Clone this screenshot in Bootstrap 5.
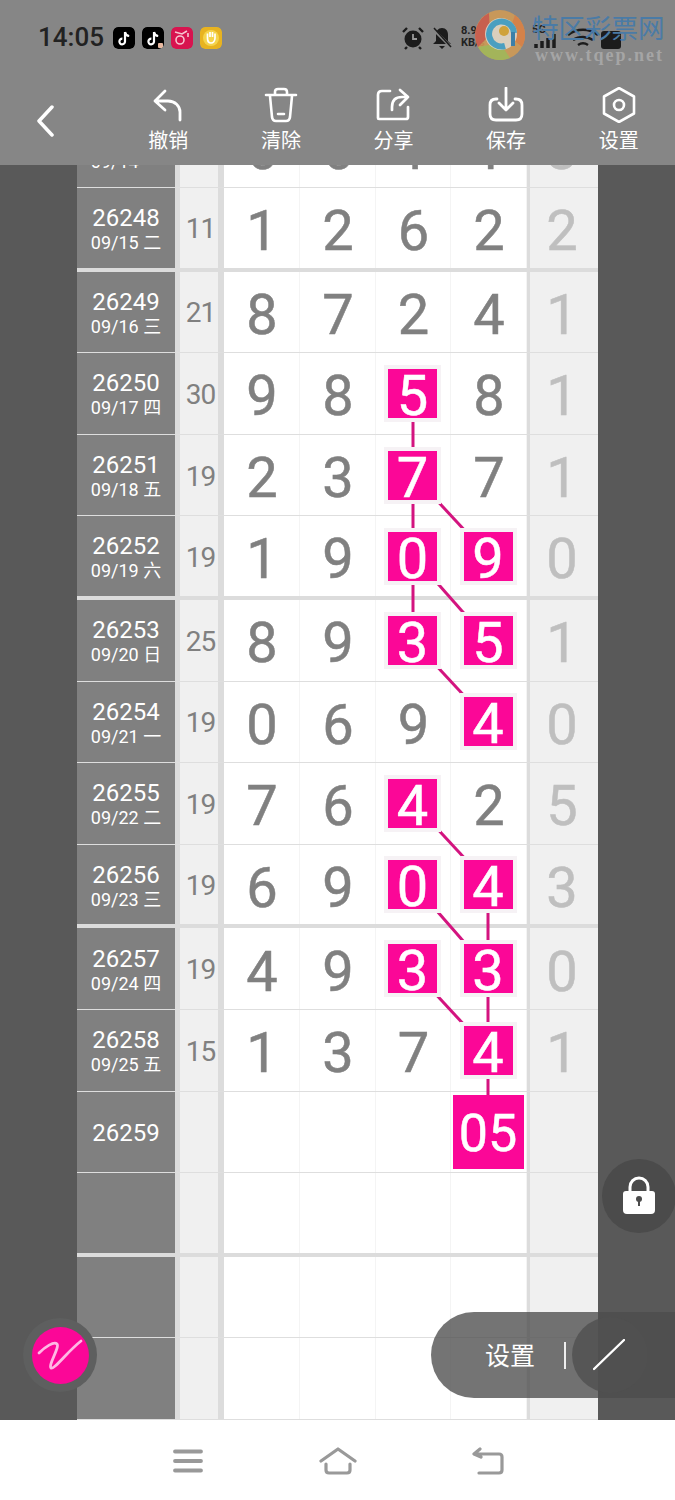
<!DOCTYPE html>
<html lang="zh">
<head>
<meta charset="UTF-8">
<meta name="viewport" content="width=device-width, initial-scale=1.0">
<title>排列五</title>
<link href="https://cdn.jsdelivr.net/npm/bootstrap@5.3.0/dist/css/bootstrap.min.css" rel="stylesheet">
<style>
body { margin: 0; background: #595959; font-family: Roboto, "Noto Sans CJK SC", sans-serif; }
.phone { width: 675px; height: 1500px; overflow: hidden; position: relative; }
.top-head { height: 165px; background: #868686; position: relative; z-index: 3; }
.status-row { height: 75px; padding: 20px 0 0 38px; position: relative; }
.clock { font-size: 26px; line-height: 34px; color: #222; width: 75px; font-weight: 500; }
.app-ic { width: 22px; height: 22px; margin: 7px 7px 0 0; border-radius: 5px; }
.tool-row { height: 90px; }
.back-cell { width: 112px; padding: 30px 0 0 36px; }
.tool-cell { width: 112.6px; color: #fff; font-size: 20px; line-height: 24px; text-align: center; padding-top: 12px; }
.tool-cell svg { display: block; margin: 0 auto 6px; }
.board-wrap { height: 1255px; position: relative; padding: 0 77px; overflow: hidden; }
.board { position: relative; background: #ddd; margin-top: -58.6px; }
.line-row { display: grid; grid-template-columns: 98px 5px 38px 6px 76px 76px 75px 76px 3px 68px; height: 81.6px; border-bottom: 1px solid #dedede; }
.line-row.last-in { height: 79.6px; border-bottom: 0; }
.block-gap { height: 4px; background: #dcdcdc; }
.c-per { background: #808080; color: #fff; display: flex; flex-direction: column; align-items: center; justify-content: center; padding-top: 3px; }
.per-no { font-size: 24px; line-height: 28px; margin-top: -1px; }
.per-date { font-size: 18px; line-height: 22px; }
.c-bar { background: #dcdcdc; }
.c-sum { background: #f0f0f0; color: #808080; font-size: 28px; letter-spacing: -1px; display: flex; align-items: center; justify-content: center; padding: 3px 0 0 3px; }
.c-num { background: #fff; color: #808080; font-size: 56px; -webkit-text-stroke: .5px; line-height: 1; display: flex; align-items: center; justify-content: center; border-right: 1px solid #f4f4f4; padding: 6px 0 0 1px; }
.c-odd { background: #f0f0f0; color: #bfbfbf; font-size: 56px; -webkit-text-stroke: .5px; line-height: 1; display: flex; align-items: center; justify-content: center; padding: 6px 4px 0 0; }
.c-num.hit-cell { padding: 0 1px 0 0; }
.hit { position: relative; z-index: 2; width: 49px; height: 49px; background: #fb0797; color: #fff; display: flex; align-items: center; justify-content: center; outline: 4px solid #f6f2f5; font-size: 56px; padding-top: 5px; }
.hit-big { position: relative; z-index: 2; width: 71px; height: 74px; background: #fb0797; color: #fff; display: flex; align-items: center; justify-content: center; font-size: 52px; padding-top: 4px; }
.link-lines { position: absolute; left: 0; top: 0; z-index: 1; }
.lock-btn { position: absolute; left: 602px; top: 1159px; width: 74px; height: 74px; border-radius: 50%; background: #4b4b4b; display: flex; align-items: center; justify-content: center; z-index: 3; }
.pen-btn { position: absolute; left: 23px; top: 1318px; width: 74px; height: 74px; border-radius: 50%; background: #5e5f5f; display: flex; align-items: center; justify-content: center; z-index: 3; }
.pen-dot { width: 57px; height: 57px; border-radius: 50%; background: #fb0797; display: flex; align-items: center; justify-content: center; }
.set-pill { position: absolute; left: 431px; top: 1312px; width: 244px; height: 86px; border-radius: 43px 0 0 43px; background: rgba(77, 77, 77, .78); z-index: 3; color: #fff; font-size: 25px; }
.set-txt { position: absolute; left: 54px; top: 28px; line-height: 34px; }
.set-sep { position: absolute; left: 133px; top: 30px; width: 2px; height: 27px; background: #eee; }
.set-round { position: absolute; left: 141px; top: 5px; width: 76px; height: 76px; border-radius: 50%; background: rgba(80, 80, 80, .8); }
.bottom-nav { position: absolute; left: 0; top: 1420px; width: 675px; height: 80px; background: #fff; z-index: 4; }
.mark-txt { position: absolute; left: 532px; top: 14px; font-size: 26.500px; line-height: 30px; color: #4a7ba6; }
.mark-url { position: absolute; left: 535px; top: 45px; font-family: "Liberation Serif", serif; font-size: 18px; line-height: 20px; color: #a5a5a5; font-weight: 700; letter-spacing: 2px; }
.speed { position: absolute; left: 461px; top: 25px; font-size: 11px; line-height: 12px; color: #222; font-weight: 700; }
.sig-lbl { position: absolute; left: 532px; top: 24px; font-size: 11px; line-height: 12px; color: #222; font-weight: 700; }
</style>
</head>
<body>
<div class="phone">
  <div class="top-head">
    <div class="status-row d-flex align-items-start">
      <div class="clock">14:05</div>
      <svg class="app-ic" viewBox="0 0 22 22"><rect width="22" height="22" rx="5" fill="#000"/><path d="M12 5v9.500a2.800 2.800 0 1 1-2.600-2.800M12 5c.4 2.400 1.800 3.700 4.200 4" fill="none" stroke="#fff" stroke-width="2.200"/></svg>
      <svg class="app-ic" viewBox="0 0 22 22"><rect width="22" height="22" rx="5" fill="#000"/><path d="M12 5v9.500a2.800 2.800 0 1 1-2.600-2.800M12 5c.4 2.400 1.800 3.700 4.200 4" fill="none" stroke="#fff" stroke-width="2.200"/><rect x="16" y="16" width="5" height="5" rx="1" fill="#e8b9a0"/></svg>
      <svg class="app-ic" viewBox="0 0 22 22"><rect width="22" height="22" rx="5" fill="#d8144f"/><circle cx="9" cy="13" r="4" fill="none" stroke="#f7c4d0" stroke-width="1.600"/><path d="M4 5l7 2 5-3M17 6v4" stroke="#f7c4d0" stroke-width="1.600" fill="none"/></svg>
      <svg class="app-ic" viewBox="0 0 22 22"><rect width="22" height="22" rx="5" fill="#e8b320"/><circle cx="11" cy="11" r="8" fill="#f5d44c"/><path d="M7.500 11V6.500M10 10V5M12.500 10V5M15 11V6.500M7.500 11c0 3 1.500 5 3.500 5s4-2 4-5" stroke="#fff" stroke-width="1.700" fill="none"/></svg>
      <svg class="position-absolute" style="left:402px;top:26px" width="22" height="24" viewBox="0 0 22 24"><circle cx="11" cy="13" r="8.500" fill="#1c1c1c"/><path d="M11 8v5h4" stroke="#999" stroke-width="1.800" fill="none"/><path d="M1 6l4-4M21 6l-4-4M5 21l-2 2M17 21l2 2" stroke="#1c1c1c" stroke-width="2.400"/></svg>
      <svg class="position-absolute" style="left:431px;top:26px" width="22" height="24" viewBox="0 0 22 24"><path d="M11 2c-4 0-6 3-6 7v6l-3 3h18l-3-3V9c0-4-2-7-6-7zM8 20h6l-3 3z" fill="#1c1c1c"/><path d="M2 3l18 18" stroke="#868686" stroke-width="3"/><path d="M3 2l17 19" stroke="#1c1c1c" stroke-width="1.500"/></svg>
      <div class="speed">8.91<br>KB/s</div>
      <svg class="position-absolute" style="left:534px;top:26px" width="110" height="24" viewBox="0 0 110 24"><path d="M2 22v-4M8 22v-7M14 22v-10M20 22v-14" stroke="#1c1c1c" stroke-width="3.500"/><path d="M34 9c9-7 21-7 30 0M39 14c6-4 14-4 20 0M44 19c3-2 7-2 10 0" stroke="#1c1c1c" stroke-width="2.500" fill="none"/><rect x="67" y="5" width="20" height="18" rx="3" fill="#1c1c1c"/></svg>
      <div class="sig-lbl">5G</div>
      <svg class="position-absolute" style="left:475px;top:10px" width="50" height="50" viewBox="0 0 50 50"><circle cx="25" cy="25" r="25" fill="#cf9a55" opacity=".9"/><path d="M14 3A25 25 0 0 0 3 37l12-12z" fill="#c8604f"/><path d="M3 37a25 25 0 0 0 32 11L25 33z" fill="#a3b45a"/><path d="M40 5a25 25 0 0 1 7 32L33 25z" fill="#d4824a"/><circle cx="26" cy="24" r="16" fill="#dcd8cf" opacity=".85"/><path d="M39 23a12.500 12.500 0 1 0-9 13" stroke="#4a9fc0" stroke-width="6" fill="none"/><path d="M38 22v14" stroke="#3b7fa8" stroke-width="4"/><circle cx="29" cy="21" r="5" fill="#cfa23a"/></svg>
      <div class="mark-txt">特区彩票网</div>
      <div class="mark-url">www.tqep.net</div>
    </div>
    <div class="tool-row d-flex">
      <div class="back-cell"><svg width="18" height="32" viewBox="0 0 18 32"><path d="M16 2L3 16l13 14" fill="none" stroke="#fff" stroke-width="3.500" stroke-linecap="round" stroke-linejoin="round"/></svg></div>
      <div class="tool-cell"><svg width="36" height="36" viewBox="0 0 36 36"><path d="M15 4L5 14l10 9M5 14h13c7 0 12 5 12 11v8" fill="none" stroke="#fff" stroke-width="2.800" stroke-linecap="round" stroke-linejoin="round"/></svg>撤销</div>
      <div class="tool-cell"><svg width="36" height="36" viewBox="0 0 36 36"><path d="M3 8h30M12 8V5q0-3 3-3h6q3 0 3 3v3M7 9l2 21q.5 4 4 4h10q3.500 0 4-4l2-21M15 27h6" fill="none" stroke="#fff" stroke-width="2.600" stroke-linecap="round" stroke-linejoin="round"/></svg>清除</div>
      <div class="tool-cell"><svg width="36" height="36" viewBox="0 0 36 36"><path d="M15 4H7q-4 0-4 4v23q0 1 1 1h27q2 0 2-2V20M25 3l8 7-8 8M33 10h-6q-10 0-10 10v3" fill="none" stroke="#fff" stroke-width="2.700" stroke-linecap="round" stroke-linejoin="round"/></svg>分享</div>
      <div class="tool-cell"><svg width="36" height="36" viewBox="0 0 36 36"><path d="M9 12H8q-6 0-6 6v9q0 6 6 6h20q6 0 6-6v-9q0-6-6-6h-1M18 1v21M11 16l7 7 7-7" fill="none" stroke="#fff" stroke-width="2.800" stroke-linecap="round" stroke-linejoin="round"/></svg>保存</div>
      <div class="tool-cell"><svg width="36" height="36" viewBox="0 0 36 36"><path d="M18 1l15 8.500v17L18 35 3 26.500v-17z" fill="none" stroke="#fff" stroke-width="2.600" stroke-linejoin="round"/><circle cx="18" cy="18" r="5" fill="none" stroke="#fff" stroke-width="2.600"/></svg>设置</div>
    </div>
  </div>

  <div class="board-wrap">
    <div class="board" id="board"></div>
  </div>

  <div class="lock-btn"><svg width="34" height="40" viewBox="0 0 34 40"><path d="M8 16V11a9 9 0 0 1 18 0v5" fill="none" stroke="#fff" stroke-width="3"/><path d="M4 15h26q3 0 3 3v16q0 4-4 4H5q-4 0-4-4V18q0-3 3-3z" fill="#fff"/><circle cx="17" cy="23" r="3" fill="#4b4b4b"/><rect x="16" y="23" width="2" height="7" fill="#4b4b4b"/></svg></div>
  <div class="pen-btn"><div class="pen-dot"><svg width="46" height="34" viewBox="0 0 46 34"><path d="M2 15C8 9 17 3 20 6c3 3-9 21-6 24 3 2 16-16 30-27" fill="none" stroke="#ffb8e4" stroke-width="2.800" stroke-linecap="round"/></svg></div></div>
  <div class="set-pill">
    <div class="set-txt">设置</div>
    <div class="set-sep"></div>
    <div class="set-round"></div>
    <svg class="position-absolute" style="left:162px;top:27px" width="32" height="32" viewBox="0 0 32 32"><path d="M1 30L31 1" stroke="#fff" stroke-width="2.400" stroke-linecap="round"/></svg>
  </div>

  <div class="bottom-nav d-flex">
    <svg class="position-absolute" style="left:173px;top:29px" width="30" height="24" viewBox="0 0 30 24"><path d="M2 2.500h26M2 12h26M2 21.500h26" stroke="#999" stroke-width="3.800" stroke-linecap="round"/></svg>
    <svg class="position-absolute" style="left:319px;top:27px" width="38" height="28" viewBox="0 0 38 28"><path d="M2 14L19 2l17 12M7 17v6q0 3 3 3h18q3 0 3-3v-6" fill="none" stroke="#999" stroke-width="3.200" stroke-linecap="round" stroke-linejoin="round"/></svg>
    <svg class="position-absolute" style="left:471px;top:27px" width="34" height="28" viewBox="0 0 34 28"><path d="M9 2L3 7l7 3M4 7h24q3 0 3 3v13q0 3-3 3H8" fill="none" stroke="#999" stroke-width="3.200" stroke-linecap="round" stroke-linejoin="round"/></svg>
  </div>
</div>

<script>
  // 开奖数据: 期号, 日期, 和值, 四个号码, 末位, 标记列
  var blocks = [
    [["26247", "09/14 一", "", [6, 6, 1, 1], 3, []], ["26248", "09/15 二", 11, [1, 2, 6, 2], 2, []]],
    [["26249", "09/16 三", 21, [8, 7, 2, 4], 1, []], ["26250", "09/17 四", 30, [9, 8, 5, 8], 1, [2]],
     ["26251", "09/18 五", 19, [2, 3, 7, 7], 1, [2]], ["26252", "09/19 六", 19, [1, 9, 0, 9], 0, [2, 3]]],
    [["26253", "09/20 日", 25, [8, 9, 3, 5], 1, [2, 3]], ["26254", "09/21 一", 19, [0, 6, 9, 4], 0, [3]],
     ["26255", "09/22 二", 19, [7, 6, 4, 2], 5, [2]], ["26256", "09/23 三", 19, [6, 9, 0, 4], 3, [2, 3]]],
    [["26257", "09/24 四", 19, [4, 9, 3, 3], 0, [2, 3]], ["26258", "09/25 五", 15, [1, 3, 7, 4], 1, [3]],
     ["26259", "", "", ["", "", "", "05"], "", [3]], ["", "", "", ["", "", "", ""], "", []]],
    [["", "", "", ["", "", "", ""], "", []], ["", "", "", ["", "", "", ""], "", []]]
  ];

  var html = "";
  blocks.forEach(function(rows, b) {
    rows.forEach(function(r, i) {
      var lastIn = i === rows.length - 1 && b < blocks.length - 1;
      html += '<div class="line-row' + (lastIn ? " last-in" : "") + '">';
      html += '<div class="c-per">' + (r[0] ? '<div class="per-no">' + r[0] + '</div>' : '');
      html += r[1] ? '<div class="per-date">' + r[1] + '</div>' : '';
      html += '</div><div class="c-bar"></div><div class="c-sum">' + r[2] + '</div><div class="c-bar"></div>';
      r[3].forEach(function(n, k) {
        var hit = r[5].indexOf(k) >= 0;
        var inner = "<span>" + n + "</span>";
        if (hit) inner = '<div class="' + (n === "05" ? "hit-big" : "hit") + '">' + n + '</div>';
        html += '<div class="c-num' + (hit ? " hit-cell" : "") + '">' + inner + '</div>';
      });
      html += '<div class="c-bar"></div><div class="c-odd"><span>' + r[4] + '</span></div></div>';
    });
    if (b < blocks.length - 1) html += '<div class="block-gap"></div>';
  });

  // 连线, 坐标相对 board
  var x3 = 336, x4 = 411, y = function(v) { return v - 106.4; };
  var links = [[x3,394,x3,475],[x3,475,x3,556],[x3,475,x4,556],[x3,556,x3,641],[x3,556,x4,641],[x3,641,x4,722],
    [x3,803,x4,884],[x3,884,x4,970],[x4,884,x4,970],[x4,970,x4,1051],[x3,970,x4,1051],[x4,1051,x4,1133]];
  var svg = '<svg class="link-lines" width="521" height="1314">';
  links.forEach(function(l) {
    svg += '<line x1="' + l[0] + '" y1="' + y(l[1]) + '" x2="' + l[2] + '" y2="' + y(l[3]) + '" stroke="#d3147f" stroke-width="3"/>';
  });
  document.getElementById("board").innerHTML = html + svg + "</svg>";
</script>
<script src="https://cdn.jsdelivr.net/npm/bootstrap@5.3.0/dist/js/bootstrap.bundle.min.js"></script>
</body>
</html>
